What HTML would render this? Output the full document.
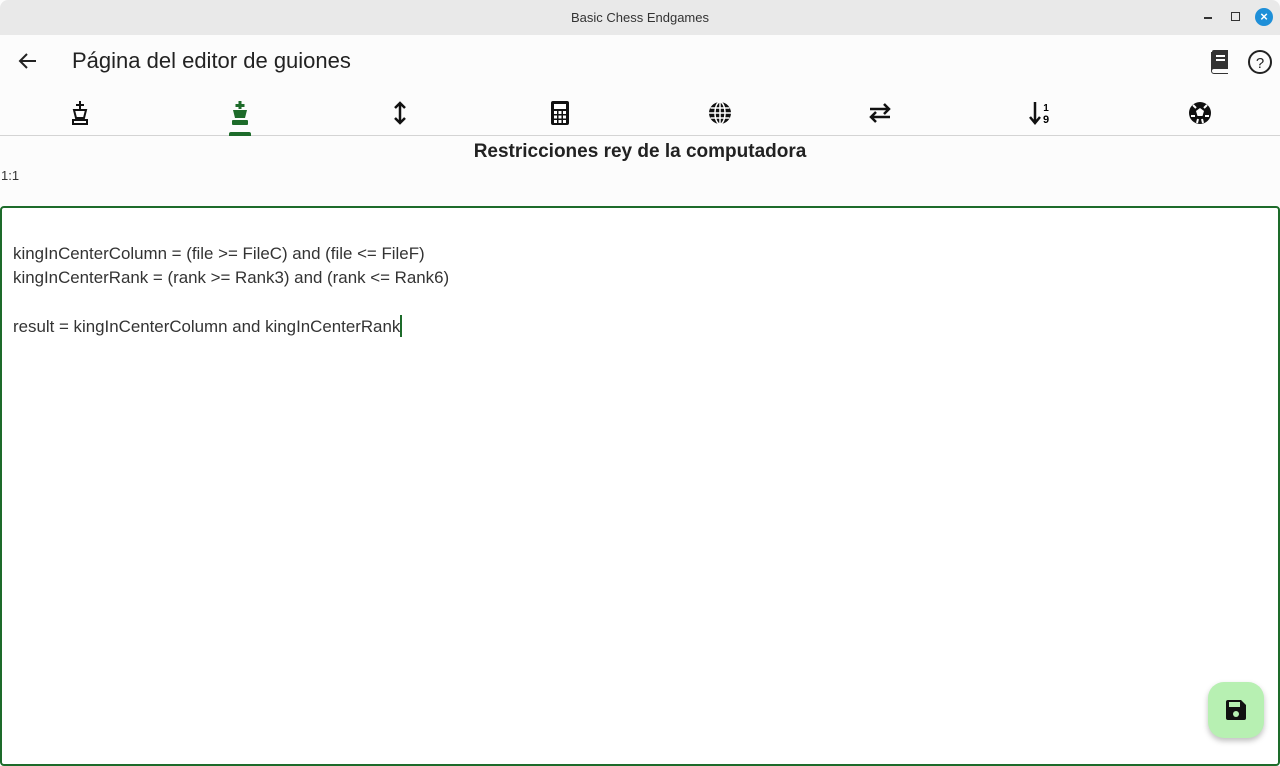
<!DOCTYPE html>
<html><head><meta charset="utf-8"><style>
*{margin:0;padding:0;box-sizing:border-box}
body{width:1280px;height:754px;overflow:hidden;background:#fcfcfc;font-family:"Liberation Sans",sans-serif;position:relative;color:#1a1a1a}
.tb{position:absolute;left:0;top:0;width:1280px;height:35px;background:#e9e9e9;border-radius:8px 8px 0 0;text-align:center;font-size:13px;line-height:35px;color:#333}
.abs{position:absolute}
.title{left:72px;top:48px;font-size:22px;color:#222}
.tabs{top:98px;left:0;width:1280px;height:38px;border-bottom:1px solid #d4d4d4}
.tab{position:absolute;top:0;width:160px;height:30px;display:flex;justify-content:center;align-items:center}
h1{position:absolute;top:141px;width:1280px;text-align:center;font-size:19px;font-weight:bold;color:#222}
.ed{left:0;top:206px;width:1280px;height:560px;border:2px solid #1d6b2a;border-radius:4px;background:#fff}
.code{left:13px;top:242px;font-size:16.9px;line-height:24.3px;color:#333;white-space:pre}
.fab{left:1208px;top:682px;width:56px;height:56px;background:#b7f0b2;border-radius:16px;box-shadow:0 3px 6px rgba(0,0,0,.25);display:flex;justify-content:center;align-items:center}
</style></head><body>
<div class="tb">Basic Chess Endgames</div>
<div class="abs" style="left:1204px;top:17px;width:8px;height:1.5px;background:#333"></div>
<div class="abs" style="left:1231px;top:12px;width:9px;height:9px;border:1.5px solid #333"></div>
<div class="abs" style="left:1255px;top:8px;width:18px;height:18px;border-radius:50%;background:#1e8fd8;color:#fff;font-size:13px;font-weight:bold;text-align:center;line-height:18px">×</div>
<svg class="abs" style="left:18px;top:51px" width="20" height="20" viewBox="0 0 20 20"><path d="M18 10H3M9 3L2 10l7 7" stroke="#222" stroke-width="2" fill="none"/></svg>
<div class="abs title">Página del editor de guiones</div>
<svg class="abs" style="left:1209px;top:49px" width="22" height="26" viewBox="0 0 22 26"><path d="M3 3a2 2 0 012-2h14v19H5a2 2 0 000 4h14v1H5a3 3 0 01-3-3V3z" fill="#333"/><rect x="7" y="6" width="9" height="2" fill="#fff"/><rect x="7" y="10" width="9" height="2" fill="#fff"/></svg>
<svg class="abs" style="left:1247px;top:49px" width="26" height="26" viewBox="0 0 26 26"><circle cx="13" cy="13" r="11" stroke="#222" stroke-width="2" fill="none"/><text x="13" y="19" font-size="15" text-anchor="middle" font-family="Liberation Sans" fill="#222">?</text></svg>
<div class="abs tabs">
<div class="tab" style="left:0"><svg width="24" height="26" viewBox="0 0 24 26"><path d="M12 1v8M8 5h8M6 10h12l-2 8H8zM5 20h14v4H5z" stroke="#111" stroke-width="2" fill="none"/></svg></div>
<div class="tab" style="left:160px"><svg width="24" height="26" viewBox="0 0 24 26"><path d="M10.5 1h3v3h3v3h-3v2h-3V7h-3V4h3z" fill="#1d6b2a"/><path d="M5 10h14l-2 8H7z" fill="#1d6b2a"/><rect x="4" y="20" width="16" height="5" rx="1" fill="#1d6b2a"/></svg></div>
<div class="abs" style="left:229px;top:34px;width:22px;height:4px;background:#1d6b2a;border-radius:2px 2px 0 0"></div>
<div class="tab" style="left:320px"><svg width="16" height="26" viewBox="0 0 16 26"><path d="M8 3v20M3 8l5-5 5 5M3 18l5 5 5-5" stroke="#111" stroke-width="2.5" fill="none"/></svg></div>
<div class="tab" style="left:480px"><svg width="18" height="24" viewBox="0 0 18 24"><rect x="0" y="0" width="18" height="24" rx="2" fill="#111"/><rect x="3" y="3" width="12" height="5" fill="#fff"/><g fill="#fff"><rect x="3" y="10" width="3" height="3"/><rect x="7.5" y="10" width="3" height="3"/><rect x="12" y="10" width="3" height="3"/><rect x="3" y="14.5" width="3" height="3"/><rect x="7.5" y="14.5" width="3" height="3"/><rect x="12" y="14.5" width="3" height="3"/><rect x="3" y="19" width="3" height="3"/><rect x="7.5" y="19" width="3" height="3"/><rect x="12" y="19" width="3" height="3"/></g></svg></div>
<div class="tab" style="left:640px"><svg width="24" height="24" viewBox="0 0 24 24"><circle cx="12" cy="12" r="11" fill="#111"/><path d="M1 12h22M12 1v22M2.5 7h19M2.5 17h19" stroke="#fff" stroke-width="1.5"/><ellipse cx="12" cy="12" rx="5" ry="11" stroke="#fff" stroke-width="1.5" fill="none"/></svg></div>
<div class="tab" style="left:800px"><svg width="24" height="24" viewBox="0 0 24 24"><path d="M2 8h19M16 3l5 5-5 5M22 16H3M8 11l-5 5 5 5" stroke="#111" stroke-width="2.5" fill="none"/></svg></div>
<div class="tab" style="left:960px"><svg width="24" height="26" viewBox="0 0 24 26"><path d="M7 2v21M2 17l5 6 5-6" stroke="#111" stroke-width="2.5" fill="none"/><text x="18" y="11" font-size="10" font-weight="bold" text-anchor="middle" font-family="Liberation Sans">1</text><text x="18" y="23" font-size="11" font-weight="bold" text-anchor="middle" font-family="Liberation Sans">9</text></svg></div>
<div class="tab" style="left:1120px"><svg width="24" height="24" viewBox="0 0 24 24"><circle cx="12" cy="12" r="11" fill="#111"/><path d="M12 7l4 3-1.5 5h-5L8 10z" fill="#fff"/><path d="M5 4l3 3M19 4l-3 3M3 15l4 0M21 15l-4 0M9 22l1-4M15 22l-1-4" stroke="#fff" stroke-width="2"/></svg></div>
</div>
<h1>Restricciones rey de la computadora</h1>
<div class="abs" style="left:1px;top:168px;font-size:13px;color:#333">1:1</div>
<div class="abs ed"></div>
<div class="abs code">kingInCenterColumn = (file &gt;= FileC) and (file &lt;= FileF)
kingInCenterRank = (rank &gt;= Rank3) and (rank &lt;= Rank6)

result = kingInCenterColumn and kingInCenterRank<span style="display:inline-block;width:2px;height:22px;background:#1d6b2a;vertical-align:-5px"></span></div>
<div class="abs fab"><svg width="22" height="22" viewBox="0 0 22 22"><path d="M1 3a2 2 0 012-2h13l5 5v13a2 2 0 01-2 2H3a2 2 0 01-2-2z" fill="#111"/><rect x="4" y="3" width="11" height="5" fill="#b7f0b2"/><circle cx="11" cy="15" r="3" fill="#b7f0b2"/></svg></div>
</body></html>
